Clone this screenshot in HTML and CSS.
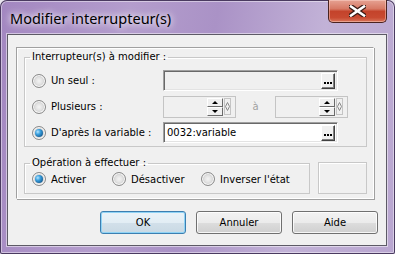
FILE: index.html
```html
<!DOCTYPE html>
<html lang="fr">
  <head>
    <meta charset="utf-8">
    <title>Modifier interrupteur(s)</title>
    <link rel="stylesheet" href="styles.css">
  </head>
<body>

<div class="fenetre">
  <div class="barre">
    <span class="titre">Modifier interrupteur(s)</span>
    <div class="fermer">
      <svg width="17" height="12" viewBox="0 0 17 12">
        <path d="M2 1.5 L15 10.5 M15 1.5 L2 10.5" stroke="#3a1a14" stroke-width="5" stroke-linecap="square"/>
        <path d="M2 1.5 L15 10.5 M15 1.5 L2 10.5" stroke="#ffffff" stroke-width="2.6" stroke-linecap="square"/>
      </svg>
    </div>
  </div>

  <div class="client">
    <div class="panneau">

      <fieldset class="groupe groupe-inter">
        <legend>Interrupteur(s) à modifier :</legend>

        <div class="ligne">
          <div class="choix"><span class="radio"></span><span>Un seul :</span></div>
          <div class="champ champ-off"><span class="points"><i></i><i></i><i></i></span></div>
        </div>

        <div class="ligne">
          <div class="choix"><span class="radio"></span><span>Plusieurs :</span></div>
          <div class="spin">
            <div class="fleches"><span class="haut"></span><span class="bas"></span></div>
            <div class="losange"><svg width="5" height="9" viewBox="0 0 5 9"><path d="M2.5 0.5 L4.5 4.5 L2.5 8.5 L0.5 4.5 Z" fill="none" stroke="#8a8a8a"/></svg></div>
          </div>
          <span class="a">à</span>
          <div class="spin">
            <div class="fleches"><span class="haut"></span><span class="bas"></span></div>
            <div class="losange"><svg width="5" height="9" viewBox="0 0 5 9"><path d="M2.5 0.5 L4.5 4.5 L2.5 8.5 L0.5 4.5 Z" fill="none" stroke="#8a8a8a"/></svg></div>
          </div>
        </div>

        <div class="ligne">
          <div class="choix"><span class="radio coche"></span><span>D'après la variable :</span></div>
          <div class="champ champ-on"><span class="valeur">0032:variable</span><span class="points"><i></i><i></i><i></i></span></div>
        </div>
      </fieldset>

      <div class="bas-panneau">
        <fieldset class="groupe groupe-op">
          <legend>Opération à effectuer :</legend>
          <div class="options">
            <div class="option o1"><span class="radio coche"></span><span>Activer</span></div>
            <div class="option o2"><span class="radio"></span><span>Désactiver</span></div>
            <div class="option"><span class="radio"></span><span>Inverser l'état</span></div>
          </div>
        </fieldset>
        <div class="vide"></div>
      </div>

    </div>

    <div class="boutons">
      <div class="bouton defaut">OK</div>
      <div class="bouton">Annuler</div>
      <div class="bouton">Aide</div>
    </div>
  </div>
</div>

</body>
</html>
```

FILE: styles.css
```css
    body {
        margin: 0;
        background: #e9e6ee;
        font-family: "DejaVu Sans", sans-serif;
        font-size: 10px;
    }
    .fenetre {
        width: 395px;
        height: 254px;
        box-sizing: border-box;
        padding: 0 8px 8px 7px;
        display: flex;
        flex-direction: column;
        border-radius: 7px 7px 2px 2px;
        background: linear-gradient(100deg, #a286c0 0%, #b49dcd 30%, #aa92c6 50%, #c2b2d7 75%, #b9a6d0 100%);
        box-shadow: inset 0 0 0 1px #4a3a60, inset 0 0 0 2px rgba(255,255,255,0.45);
    }
    .barre {
        height: 34px;
        display: flex;
        justify-content: space-between;
        align-items: flex-start;
    }
    .titre {
        font-family: "Noto Sans", sans-serif;
        font-size: 14.5px;
        color: #000;
        margin: 8px 0 0 3px;
        text-shadow: 0 0 6px #fff, 0 0 10px rgba(255,255,255,0.8);
    }
    .fermer {
        width: 59px;
        height: 23px;
        box-sizing: border-box;
        border: 1px solid #4a2320;
        border-top: none;
        border-radius: 0 0 5px 5px;
        background: linear-gradient(#e6a293 0%, #d77965 40%, #c4432b 52%, #c84a31 80%, #d9765c 100%);
        box-shadow: inset 0 0 0 1px rgba(255,220,210,0.45);
        display: flex;
        align-items: center;
        justify-content: center;
    }
    .client {
        flex: 1;
        background: #f0f0f0;
        border: 1px solid #5d5a66;
        box-shadow: 0 0 0 1px rgba(255,255,255,0.5);
        display: flex;
        flex-direction: column;
    }
    .panneau {
        width: 358px;
        margin: 12px 0 0 8px;
        border: 1px solid #a0a0a0;
        border-right-color: #fff;
        border-bottom-color: #fff;
        box-shadow: inset 1px 1px 0 #fff, 1px 1px 0 #a0a0a0;
        padding: 0 6px 5px 7px;
        height: 152px;
        box-sizing: border-box;
    }
    .groupe {
        margin: 0;
        padding: 0 0 0 7px;
        border: 1px solid #c8c8c8;
        box-shadow: inset 1px 1px 0 #fff;
        min-width: 0;
    }
    .groupe legend {
        padding: 0 2px;
        margin-left: -2px;
        line-height: 14px;
        color: #000;
    }
    .groupe-inter {
        margin-top: 2px;
        padding-top: 6px;
        padding-bottom: 3px;
    }
    .ligne {
        display: flex;
        align-items: center;
        height: 21px;
        margin-bottom: 5px;
    }
    .ligne:last-child {
        margin-bottom: 0;
    }
    .choix, .option {
        display: flex;
        align-items: center;
        gap: 5px;
    }
    .choix {
        width: 131px;
    }
    .radio {
        width: 14px;
        height: 14px;
        box-sizing: border-box;
        border-radius: 50%;
        border: 1px solid #8a8a8a;
        background: radial-gradient(circle at 50% 50%, #f4f4f4 0%, #e2e2e2 40%, #c9c9c9 70%, #eeeeee 100%);
        box-shadow: inset 0 0 0 1px #fbfbfb;
        flex: none;
        position: relative;
    }
    .radio.coche::after {
        content: "";
        position: absolute;
        left: 2px;
        top: 2px;
        width: 8px;
        height: 8px;
        border-radius: 50%;
        background: radial-gradient(circle at 35% 35%, #b6e6ff 0%, #3aa0df 35%, #14598f 80%, #0d3e6a 100%);
    }
    .champ {
        width: 175px;
        height: 21px;
        box-sizing: border-box;
        border: 1px solid;
        border-color: #a0a0a0 #fff #fff #a0a0a0;
        box-shadow: inset 1px 1px 0 #696969, inset -1px -1px 0 #e3e3e3;
        display: flex;
        align-items: center;
        justify-content: space-between;
        padding: 0 2px 0 2px;
    }
    .champ-off {
        background: #f0f0f0;
        justify-content: flex-end;
    }
    .champ-on {
        background: #fff;
    }
    .valeur {
        padding-left: 1px;
        color: #000;
    }
    .points {
        width: 14px;
        height: 16px;
        box-sizing: border-box;
        border: 1px solid;
        border-color: #fff #404040 #404040 #fff;
        box-shadow: inset -1px -1px 0 #808080;
        background: #f0f0f0;
        display: flex;
        gap: 1px;
        align-items: flex-end;
        justify-content: center;
        padding-bottom: 4px;
    }
    .points i {
        width: 2px;
        height: 2px;
        background: #000;
    }
    .spin {
        width: 73px;
        height: 22px;
        box-sizing: border-box;
        border: 1px solid #c4c4c4;
        background: #f0f0f0;
        display: flex;
        justify-content: flex-end;
        align-items: center;
        padding-right: 4px;
        gap: 1px;
    }
    .fleches {
        display: flex;
        flex-direction: column;
    }
    .fleches span {
        width: 16px;
        height: 9px;
        box-sizing: border-box;
        border: 1px solid;
        border-color: #fff #6a6a6a #6a6a6a #fff;
        background: #f0f0f0;
        position: relative;
    }
    .fleches .haut::after, .fleches .bas::after {
        content: "";
        position: absolute;
        left: 4px;
        border-left: 3px solid transparent;
        border-right: 3px solid transparent;
    }
    .fleches .haut::after {
        top: 2px;
        border-bottom: 3px solid #000;
    }
    .fleches .bas::after {
        top: 2px;
        border-top: 3px solid #000;
    }
    .losange {
        width: 7px;
        height: 17px;
        box-sizing: border-box;
        border: 1px solid #c4c4c4;
        display: flex;
        align-items: center;
        justify-content: center;
    }
    .a {
        width: 39px;
        text-align: center;
        color: #a0a0a0;
    }
    .bas-panneau {
        display: flex;
        gap: 8px;
        margin-top: 9px;
        align-items: flex-end;
    }
    .groupe-op {
        width: 289px;
        box-sizing: border-box;
        padding-top: 2px;
        padding-bottom: 7px;
    }
    .options {
        display: flex;
        height: 14px;
        align-items: center;
    }
    .option.o1 {
        width: 80px;
    }
    .option.o2 {
        width: 89px;
    }
    .vide {
        width: 49px;
        height: 32px;
        box-sizing: border-box;
        border: 1px solid #c8c8c8;
        box-shadow: inset 1px 1px 0 #fff;
    }
    .boutons {
        display: flex;
        justify-content: flex-end;
        gap: 10px;
        margin: 12px 8px 0 0;
    }
    .bouton {
        width: 86px;
        height: 23px;
        box-sizing: border-box;
        border: 1px solid #707070;
        border-radius: 3px;
        background: linear-gradient(#f2f2f2 0%, #ebebeb 50%, #dddddd 51%, #cfcfcf 100%);
        box-shadow: inset 0 0 0 1px rgba(255,255,255,0.8);
        display: flex;
        align-items: center;
        justify-content: center;
    }
    .bouton.defaut {
        border-color: #3c7fb1;
        background: linear-gradient(#eaf3f9 0%, #e2edf4 50%, #d2e0ea 51%, #c9d9e4 100%);
        box-shadow: inset 0 0 0 1px #8fd3f5;
    }
```
